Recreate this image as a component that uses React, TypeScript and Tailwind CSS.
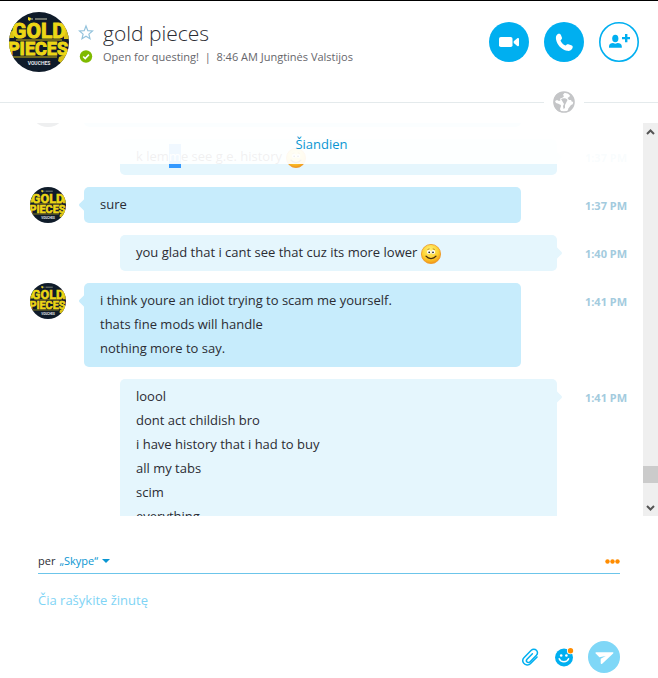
import type { ReactNode } from "react";

function Avatar({ className }: { className: string }) {
  return (
    <svg viewBox="0 0 60 60" className={className} role="img" aria-label="gold pieces">
      <defs>
        <clipPath id="round">
          <circle cx="30" cy="30" r="30" />
        </clipPath>
      </defs>
      <g clipPath="url(#round)">
        <rect width="60" height="60" fill="#0f1b2a" />
        <path d="M20 7h4M26 7h12" stroke="#8b8f80" strokeWidth="1.5" />
        <path d="M19 5l3 1-1 3-2-1z" fill="#f5dc1b" />
        <path d="M1 20l4-2v8H0zM55 12l6 9v6h-6zM50 45l10-4v13l-8 4v-7l-3-2z" fill="#d8c116" />
        <g
          fill="#ecd615"
          stroke="#ecd615"
          strokeWidth="1"
          fontFamily="Roboto, 'Liberation Sans', sans-serif"
          fontWeight="700"
          textAnchor="middle"
        >
          <text x="30" y="26" fontSize="21">GOLD</text>
          <text x="29" y="43" fontSize="18">PIECES</text>
        </g>
        <path d="M7 28h46M4 45h44" stroke="#c9b214" strokeWidth="1" />
        <text
          x="30"
          y="53"
          fontSize="5"
          fill="#e4e6e8"
          fontWeight="700"
          textAnchor="middle"
          fontFamily="Roboto, 'Liberation Sans', sans-serif"
        >
          VOUCHES
        </text>
      </g>
    </svg>
  );
}

function Smile() {
  return (
    <svg viewBox="0 0 20 20" className="ml-1 inline-block size-5 align-middle" role="img" aria-label="smile">
      <defs>
        <radialGradient id="face" cx="0.45" cy="0.3" r="0.75">
          <stop offset="0" stopColor="#fff27a" />
          <stop offset="0.6" stopColor="#fdd02e" />
          <stop offset="1" stopColor="#f08a12" />
        </radialGradient>
      </defs>
      <circle cx="10" cy="10" r="9.6" fill="url(#face)" stroke="#ee9420" strokeWidth="0.8" />
      <circle cx="8" cy="8" r="2" fill="#fff" />
      <circle cx="12.2" cy="8" r="2" fill="#fff" />
      <circle cx="8.2" cy="8.3" r="0.9" fill="#222" />
      <circle cx="12" cy="8.3" r="0.9" fill="#222" />
      <path d="M6.5 5.5l2-.7M11.8 4.8l2 .7" stroke="#9a6a10" strokeWidth="0.7" />
      <path d="M5 12.2c2.5 3.2 7.5 3.2 10 0" fill="none" stroke="#4a2d0c" strokeWidth="1.3" strokeLinecap="round" />
    </svg>
  );
}

function Received({ time, children }: { time?: string; children: ReactNode }) {
  return (
    <li className="flex items-start">
      <Avatar className="ml-[30px] size-9 shrink-0" />
      <div className="relative ml-[18px] mr-9 flex-1 rounded-[5px] bg-[#c7ecfc] px-4 pb-[7px] pt-[5px] leading-6">
        <svg viewBox="0 0 6 16" className="absolute -left-[5px] top-2.5 h-4 w-1.5 text-[#c7ecfc]" aria-hidden="true">
          <path d="M6 0C5 4 0 6 0 8s5 4 6 8z" fill="currentColor" />
        </svg>
        {children}
      </div>
      <Time>{time}</Time>
    </li>
  );
}

function Sent({ time, children }: { time: string; children: ReactNode }) {
  return (
    <li className="flex items-start">
      <div className="relative ml-[120px] flex-1 rounded-[5px] bg-[#e5f6fd] px-4 pb-[7px] pt-[5px] leading-6">
        <svg viewBox="0 0 6 16" className="absolute -right-[5px] top-2.5 h-4 w-1.5 text-[#e5f6fd]" aria-hidden="true">
          <path d="M0 0c1 4 6 6 6 8s-5 4-6 8z" fill="currentColor" />
        </svg>
        {children}
      </div>
      <Time>{time}</Time>
    </li>
  );
}

function Time({ children }: { children?: ReactNode }) {
  return (
    <time className="w-[86px] shrink-0 pr-4 pt-[7px] text-right font-['Noto_Sans',sans-serif] text-[11px] font-bold leading-6 text-[#a3cbde]">
      {children}
    </time>
  );
}

export default function App() {
  return (
    <main className="flex h-screen flex-col border-t border-black bg-white font-['Open_Sans',sans-serif] text-[13px] text-[#2b2c33]">
      <header className="flex items-start pl-[9px] pr-[19px] pt-[11px]">
        <Avatar className="size-[60px] shrink-0" />
        <div className="ml-2 min-w-0 flex-1 pt-[7px]">
          <div className="flex items-center gap-2">
            <button type="button" aria-label="Add to favourites" className="w-[18px]">
              <svg viewBox="0 0 18 18" className="size-[18px]" fill="none" stroke="#94c3dc" strokeWidth="1.2">
                <path d="M9 2l1.800 4.600 4.700.4-3.600 3.100 1.100 4.700L9 12.300l-4 2.500 1.100-4.700L2.500 7l4.700-.4z" />
              </svg>
            </button>
            <h1 className="text-[21px] font-light leading-7">gold pieces</h1>
          </div>
          <div className="flex items-center gap-2 pt-px">
            <svg viewBox="0 0 18 18" className="size-[18px]" role="img" aria-label="Online">
              <circle cx="9" cy="8.500" r="6.200" fill="#7fba00" />
              <path d="M6.200 8.500l2 2 3.700-3.900" fill="none" stroke="#fff" strokeWidth="1.600" />
            </svg>
            <p className="truncate text-[11px] leading-[18px] text-[#66666b]">
              Open for questing!&nbsp; |&nbsp; 8:46 AM Jungtinės Valstijos
            </p>
          </div>
        </div>
        <div className="flex gap-[15px] pt-2.5">
          <button type="button" aria-label="Video call" className="size-10 rounded-full bg-[#00aff0]">
            <svg viewBox="0 0 40 40" fill="#fff">
              <rect x="10" y="15" width="13.500" height="10" rx="1.800" />
              <path d="M24.700 19.200l3.600-3c.8-.6 1.700-.3 1.700.7v6.400c0 1-.9 1.300-1.700.7l-3.600-3z" />
            </svg>
          </button>
          <button type="button" aria-label="Call" className="size-10 rounded-full bg-[#00aff0]">
            <svg viewBox="0 0 40 40" fill="#fff">
              <path d="M13.500 12.200c1.600-.9 2.800-.5 3.400.9l1 2.500c.5 1.300-.5 1.900-1.400 2.800.8 2.200 2.700 4.200 5 5.200.9-.9 1.500-1.700 2.800-1.300l3 1c1.500.6 1.900 1.600 1 3.200-1 2-3 2.800-5.300 2.300-5.600-1.300-10-5.900-11-11.600-.3-2.200.1-4 1.500-5z" />
            </svg>
          </button>
          <button type="button" aria-label="Add people" className="size-10 rounded-full">
            <svg viewBox="0 0 40 40" fill="#00aff0">
              <circle cx="20" cy="20" r="19.200" fill="none" stroke="#00aff0" strokeWidth="1.600" />
              <ellipse cx="16.300" cy="16.500" rx="3.100" ry="3.800" />
              <path d="M10 25.800v-1.500c0-2.200 2-3.200 4-3.300l2.300.7 2.300-.7c2 .1 4.200 1.100 4.200 3.300v1.500z" />
              <path d="M26 12h2.400v3H31v2.300h-2.600v3H26v-3h-3V15h3z" />
            </svg>
          </button>
        </div>
      </header>

      <div className="mt-[19px] flex items-center gap-[9px]">
        <hr className="flex-1 border-[#e4eaec]" />
        <svg viewBox="0 0 22 22" className="size-[22px]" role="img" aria-label="Conversation">
          <circle cx="11" cy="11" r="10" fill="#fff" stroke="#c4c5c7" strokeWidth="1.600" />
          <g fill="#c4c5c7">
            <path d="M1 9C2 3 6 1 12 1c-1 2-2 2-2 3 2 1 0 3-2 3L7 8c1 1 0 2-1 2l-2-1-2 1 1 2c2 1 5 1 5 3l-1 3 1 3C3 20 0 15 1 9z" />
            <path d="M16 2.500c3 1.500 5 4 5 7.500l-2 1-1-2-2 0-1.500-2 1.500-1 1-1zM8 8c2-1.500 6-1 6.500 1l-1.500 3-1 2v3l-1.500 1-.5-3 1-2zM18 14l2.500-1c-.5 3-2 5-5 7l-.5-2z" />
          </g>
        </svg>
        <hr className="w-[74px] border-[#e4eaec]" />
      </div>

      <section aria-label="Messages" className="mt-2.5 flex min-h-0 flex-1">
        <div className="relative min-w-0 flex-1 overflow-hidden">
          <ol className="-mt-8 flex flex-col gap-3">
            <Received>&nbsp;</Received>
            <Sent time="1:37 PM">
              k lem<span className="bg-[#3399ff] py-[3px] text-white">m</span>e see g.e. history
              <Smile />
            </Sent>
            <Received time="1:37 PM">sure</Received>
            <Sent time="1:40 PM">
              you glad that i cant see that cuz its more lower
              <Smile />
            </Sent>
            <Received time="1:41 PM">
              <p>i think youre an idiot trying to scam me yourself.</p>
              <p>thats fine mods will handle</p>
              <p>nothing more to say.</p>
            </Received>
            <Sent time="1:41 PM">
              <p>loool</p>
              <p>dont act childish bro</p>
              <p>i have history that i had to buy</p>
              <p>all my tabs</p>
              <p>scim</p>
              <p>everything</p>
            </Sent>
          </ol>
          <div className="absolute inset-x-0 top-0 h-[41px] bg-white/93 pt-[11px] text-center leading-5 text-[#0a96d2]">
            Šiandien
          </div>
        </div>
        <div className="flex w-[15px] shrink-0 flex-col bg-[#efefef]">
          <button type="button" aria-label="Scroll up" className="h-4">
            <svg viewBox="0 0 15 16" className="h-4 w-[15px]" fill="none" stroke="#555" strokeWidth="2">
              <path d="M4 11l3.500-3.500L11 11" />
            </svg>
          </button>
          <div className="flex-1" />
          <div className="h-[17px] bg-[#cbcbcb]" />
          <button type="button" aria-label="Scroll down" className="mt-4 h-[17px]">
            <svg viewBox="0 0 15 16" className="h-4 w-[15px]" fill="none" stroke="#555" strokeWidth="2">
              <path d="M4 6l3.500 3.500L11 6" />
            </svg>
          </button>
        </div>
      </section>

      <footer className="px-[38px] pb-[5px] pt-9">
        <div className="flex h-[22px] items-center justify-between border-b border-[#6cc5ea] pb-[3px] text-[11px] leading-4">
          <button type="button" className="flex items-center gap-1">
            <span>per</span>
            <span className="text-[#0a96d2]">„Skype“</span>
            <svg viewBox="0 0 8 4" className="h-1 w-2" fill="#0a96d2">
              <path d="M0 0h8L4 4z" />
            </svg>
          </button>
          <button type="button" aria-label="More options">
            <svg viewBox="0 0 15 5" className="h-[5px] w-[15px]" fill="#ff8c00">
              <circle cx="2.500" cy="2.500" r="2.200" />
              <circle cx="7.500" cy="2.500" r="2.200" />
              <circle cx="12.500" cy="2.500" r="2.200" />
            </svg>
          </button>
        </div>
        <textarea
          aria-label="Message"
          placeholder="Čia rašykite žinutę"
          className="mt-3.5 block h-[53px] w-full resize-none leading-6 outline-none placeholder:text-[#7fd4f5]"
        />
        <div className="flex items-center justify-end">
          <button type="button" aria-label="Attach file" className="mr-3.5">
            <svg viewBox="0 0 24 24" className="size-5" fill="none" stroke="#00aff0" strokeWidth="1.800" strokeLinecap="round" strokeLinejoin="round">
              <path d="M20.500 12l-7.800 7.800a5.300 5.300 0 0 1-8.300-.4 5.300 5.300 0 0 1 .6-6.800l8.500-8.700a4.300 4.300 0 0 1 6.200 0 4.300 4.300 0 0 1 0 6.100l-7.900 7.900a2.300 2.300 0 0 1-3.400-3.300l6.500-6.500" />
            </svg>
          </button>
          <button type="button" aria-label="Emoticons" className="mr-3.5">
            <svg viewBox="0 0 20 20" className="size-5">
              <circle cx="10" cy="10.500" r="9" fill="#00aff0" />
              <circle cx="7.200" cy="8.500" r="1.300" fill="#fff" />
              <circle cx="12.400" cy="8.500" r="1.300" fill="#fff" />
              <path d="M5.200 11.800c1.600 4 7.800 4 9.400 0" fill="none" stroke="#fff" strokeWidth="1.500" strokeLinecap="round" />
              <circle cx="16.500" cy="3.700" r="3.600" fill="#fff" />
              <circle cx="16.500" cy="3.700" r="2.700" fill="#ff8c00" />
            </svg>
          </button>
          <button type="button" aria-label="Send" className="size-8 rounded-full bg-[#7fd7f7]">
            <svg viewBox="0 0 32 32" fill="#fff">
              <path d="M8.500 11.200h16c1 0 1.200.7.600 1.300L14.200 22.700c-.8.6-1.500.3-1.500-.6v-4.300l5-2.700-6.300 1.200-3.700-3.700c-.6-.7-.2-1.400.8-1.400z" />
            </svg>
          </button>
        </div>
      </footer>
    </main>
  );
}
